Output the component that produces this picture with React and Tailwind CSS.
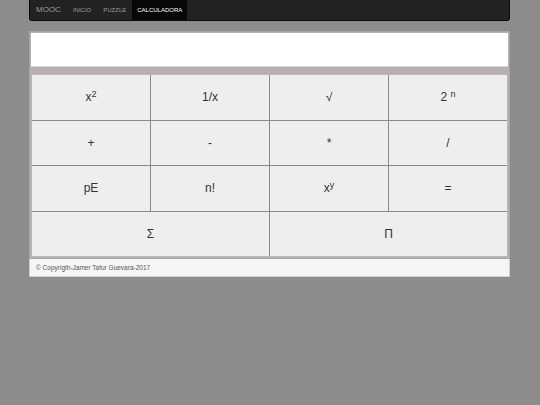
import React from "react";

const keys = [
  { label: <>x<sup className="text-[9px]">2</sup></> },
  { label: "1/x" },
  { label: "√" },
  { label: <>2 <sup className="text-[9px]">n</sup></> },
  { label: "+" },
  { label: "-" },
  { label: "*" },
  { label: "/" },
  { label: "pE" },
  { label: "n!" },
  { label: <>x<sup className="text-[9px]">y</sup></> },
  { label: "=" },
  { label: "Σ", span: true },
  { label: "Π", span: true },
];

const App = () => {
  return (
    <div
      className="min-h-[405px] w-full bg-[#8c8c8c]"
      style={{ fontFamily: '"Liberation Sans", Arial, sans-serif' }}
    >
      {/* navbar */}
      <div className="ml-[29px] flex h-[21px] w-[481px] items-stretch rounded-b-[3px] border-x border-b border-[#080808] bg-[#222222]">
        <div className="flex items-center pl-[6px] pr-[12px] text-[8px] text-[#9d9d9d]">MOOC</div>
        <div className="flex items-center text-[6px] text-[#9d9d9d]">INICIO</div>
        <div className="flex items-center pl-[12px] pr-[6px] text-[6px] text-[#9d9d9d]">PUZZLE</div>
        <div className="flex items-center bg-[#080808] px-[5px] text-[6px] text-white">CALCULADORA</div>
      </div>

      {/* calculator */}
      <div className="ml-[29px] mt-[10px] w-[481px]">
        <div className="border border-[#a6a6a6] bg-[#b9afb3] p-px">
          <div className="h-[34px] border-b border-[#d6d6d6] bg-white"></div>
          <div className="h-[7px]"></div>
          <div className="grid h-[183px] grid-cols-4 grid-rows-4 gap-px border border-[#b8b8b8] bg-[#8a8a8a]">
            {keys.map((k, i) => (
              <div
                key={i}
                className={
                  "flex items-center justify-center bg-[#eeeeee] text-[12px] text-[#333333] " +
                  (k.span ? "col-span-2" : "")
                }
              >
                <span>{k.label}</span>
              </div>
            ))}
          </div>
        </div>
        <div className="flex h-[18px] items-center border-x border-b border-[#d0d0d0] bg-[#f5f5f5] px-[6px] text-[6.5px] text-[#555555]">
          © Copyrigth-Jamer Tafur Guevara-2017
        </div>
      </div>
    </div>
  );
};

export default App;
